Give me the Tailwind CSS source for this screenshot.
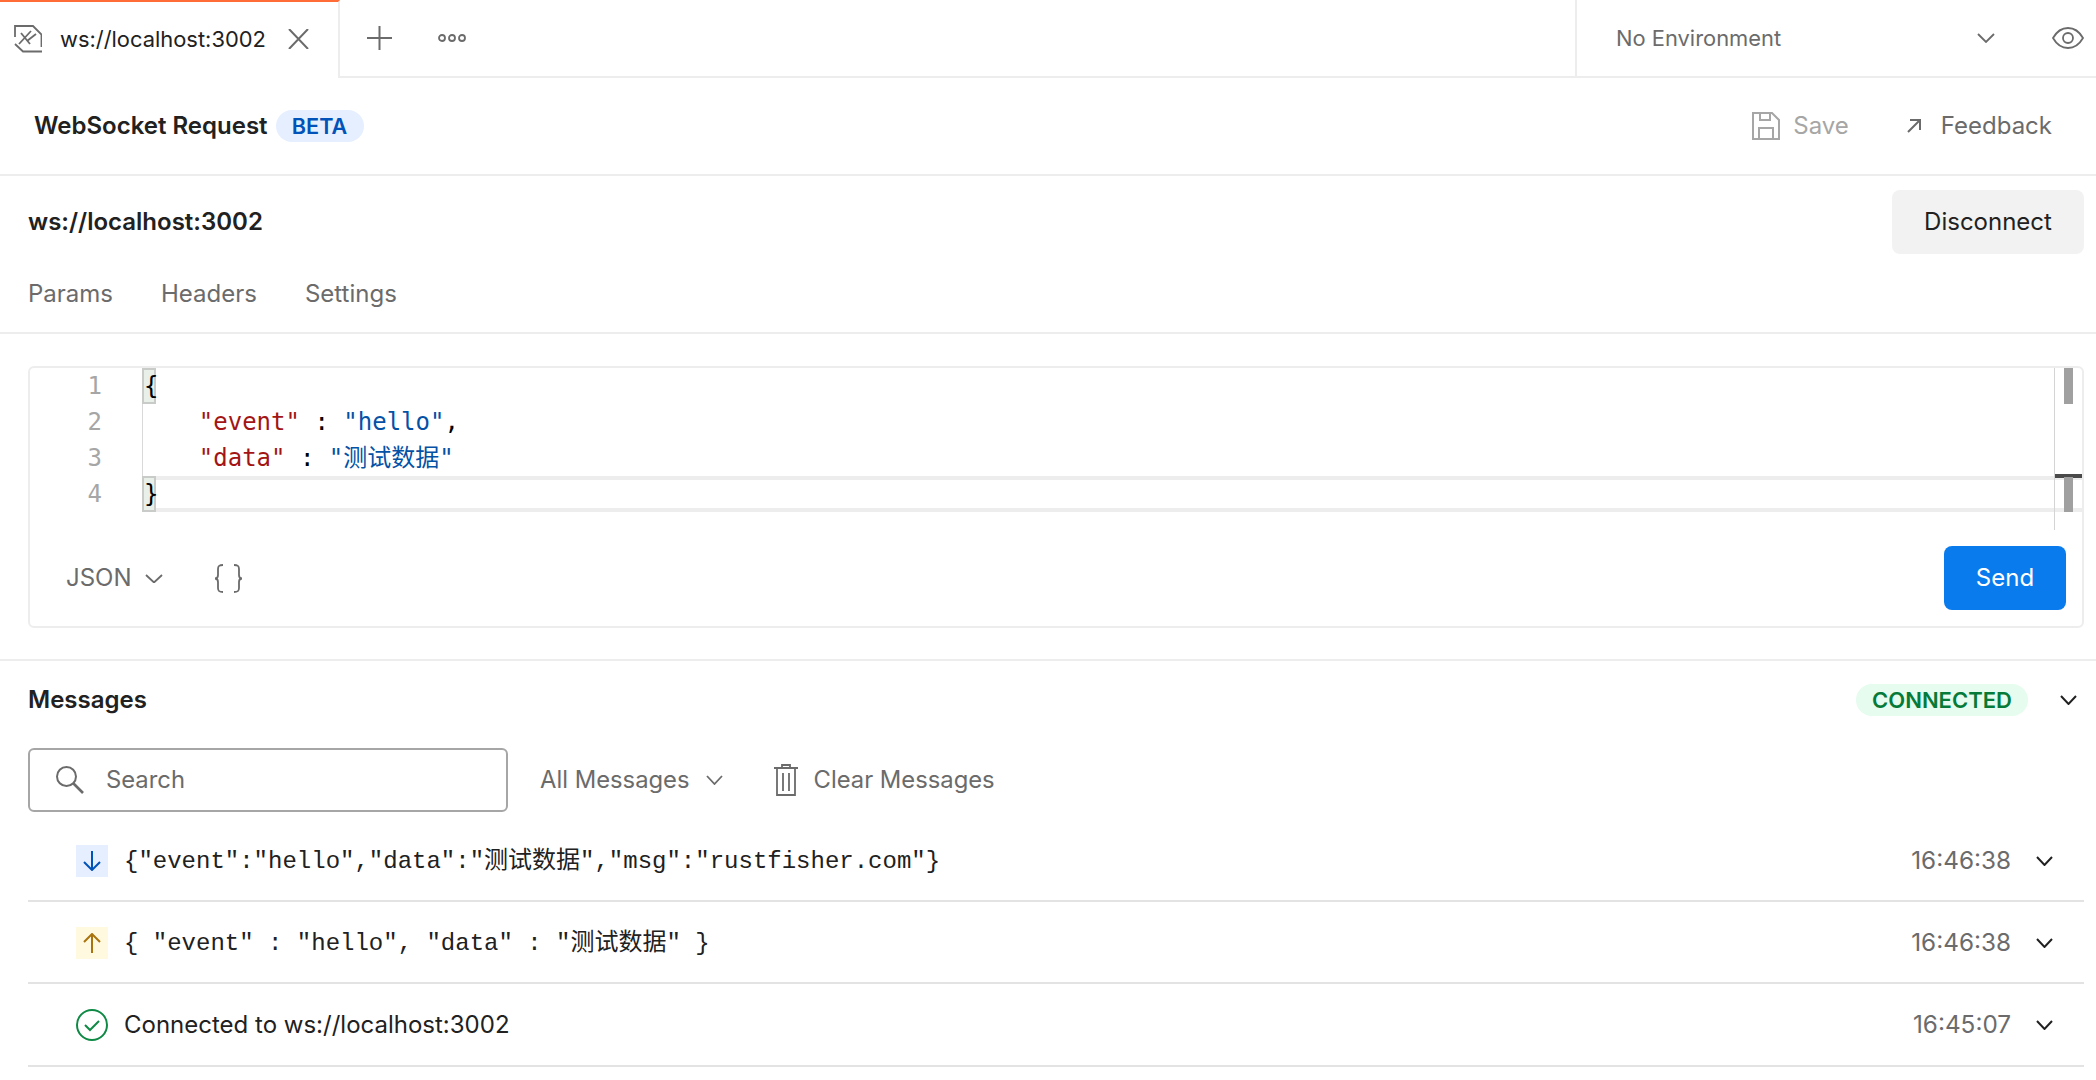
<!DOCTYPE html>
<html>
<head>
    <title>WebSocket Request</title>
    <script src="https://cdn.jsdelivr.net/npm/@tailwindcss/browser@4"></script>
</head>
<body class="bg-white">
    <div class="flex h-[1080px] w-[2096px] flex-col overflow-hidden font-['Inter',sans-serif] text-[24px] text-[#6b6b6b]">

        <!-- tab bar -->
        <div class="flex h-[78px] shrink-0 text-[21.9px]">
            <div class="flex w-[340px] items-center border-t-2 border-r-2 border-t-[#ff6c37] border-r-[#ededed] pb-[2px] pl-[14px]">
                <svg class="h-[28px] w-[28px]" viewBox="0 0 28 28" fill="none" stroke="#6b6b6b" stroke-width="1.8">
                    <path d="M1 12V1H19L27.5 9.5V22"/><path d="M1 19L9 26.5H28"/><path d="M7 8L16 19"/><path d="M5 19L17 6"/><path d="M13 16L22 9"/>
                </svg>
                <span class="ml-[18px] text-[#212121]">ws://localhost:3002</span>
                <svg class="ml-[22px] h-[20px] w-[21px]" viewBox="0 0 21 20" fill="none" stroke="#6b6b6b" stroke-width="2"><path d="M1 0L20 20M20 0L1 20"/></svg>
            </div>
            <div class="flex flex-1 items-center border-b-2 border-[#ededed]">
                <svg class="ml-[27px] h-[24px] w-[25px]" viewBox="0 0 25 24" fill="none" stroke="#6b6b6b" stroke-width="2"><path d="M12.5 0V24M0 12H25"/></svg>
                <svg class="ml-[46px] h-[10px] w-[28px]" viewBox="0 0 28 10" fill="none" stroke="#6b6b6b" stroke-width="1.8"><circle cx="4" cy="5" r="3"/><circle cx="14" cy="5" r="3"/><circle cx="24" cy="5" r="3"/></svg>
                <div class="ml-auto flex h-full w-[521px] items-center border-l-2 border-[#ededed] pl-[39px]">
                    <span>No Environment</span>
                    <svg class="ml-[196px] h-[10px] w-[18px]" viewBox="0 0 18 10" fill="none" stroke="#6b6b6b" stroke-width="1.8"><path d="M1 1L9 9L17 1"/></svg>
                    <svg class="ml-[57px] h-[22px] w-[32px]" viewBox="0 0 32 22" fill="none" stroke="#6b6b6b" stroke-width="1.8"><path d="M1 11C5 4 10 1 16 1C22 1 27 4 31 11C27 18 22 21 16 21C10 21 5 18 1 11Z"/><circle cx="16" cy="11" r="5"/></svg>
                </div>
            </div>
        </div>

        <!-- title row -->
        <div class="flex h-[98px] shrink-0 items-center border-b-2 border-[#ededed] pl-[34px] pr-[44px]">
            <span class="font-semibold text-[#212121]">WebSocket Request</span>
            <span class="ml-[8px] flex h-[32px] w-[88px] items-center justify-center rounded-full bg-[#e6efff] text-[21.6px] font-semibold text-[#0053b8]">BETA</span>
            <svg class="ml-auto h-[28px] w-[28px]" viewBox="0 0 28 28" fill="none" stroke="#a6a6a6" stroke-width="2"><path d="M1 1H20L27 8V27H1Z"/><path d="M8 1V8H18V1"/><path d="M7 27V16H21V27"/></svg>
            <span class="ml-[13px] text-[#a6a6a6]">Save</span>
            <svg class="ml-[58px] h-[14px] w-[14px]" viewBox="0 0 14 14" fill="none" stroke="#6b6b6b" stroke-width="2"><path d="M1 13L13 1M3 1H13V11"/></svg>
            <span class="ml-[20px]">Feedback</span>
        </div>

        <!-- url row -->
        <div class="flex h-[78px] shrink-0 items-center justify-between pl-[28px] pr-[12px] pt-[14px]">
            <span class="font-semibold text-[#212121]">ws://localhost:3002</span>
            <button class="h-[64px] w-[192px] rounded-[8px] bg-[#f2f2f2] text-[#212121]">Disconnect</button>
        </div>

        <!-- tabs -->
        <div class="flex h-[80px] shrink-0 items-center gap-[48px] border-b-2 border-[#ededed] pl-[28px] pt-[2px]">
            <span>Params</span>
            <span>Headers</span>
            <span>Settings</span>
        </div>

        <!-- editor -->
        <div class="ml-[28px] mt-[32px] flex h-[262px] w-[2056px] shrink-0 flex-col rounded-[6px] border-2 border-[#ededed]">
            <div class="relative flex h-[144px] font-['DejaVu_Sans_Mono','Noto_Sans_CJK_SC',monospace] text-[24px] leading-[36px] text-black">
                <div class="w-[112px] shrink-0 pr-[40px] text-right text-[#a6a6a6]">
                    <div class="h-[36px]">1</div>
                    <div class="h-[36px]">2</div>
                    <div class="h-[36px]">3</div>
                    <div class="h-[36px]">4</div>
                </div>
                <div class="flex-1 border-l border-[#d9d9d9]">
                    <div class="h-[36px]"><span class="-ml-px block h-[36px] w-[14px] border-2 border-[#c8cbc8] bg-[#e9efe9] leading-[32px]">{</span></div>
                    <div class="-ml-[2px] h-[36px] whitespace-pre">    <span class="text-[#a31515]">"event"</span> : <span class="text-[#0451a5]">"hello"</span>,</div>
                    <div class="-ml-[2px] h-[36px] whitespace-pre">    <span class="text-[#a31515]">"data"</span> : <span class="text-[#0451a5]">"测试数据"</span></div>
                    <div class="flex h-[36px]"><span class="-ml-px block h-[36px] w-[14px] shrink-0 border-2 border-[#c8cbc8] bg-[#e9efe9] leading-[32px]">}</span><div class="h-[36px] flex-1 border-y-4 border-[#ededed]"></div></div>
                </div>
                <!-- overview ruler -->
                <div class="absolute right-0 top-0 h-[162px] w-[28px] border-l border-[#d4d4d4]">
                    <div class="ml-[9px] h-[36px] w-[9px] bg-[#a0a0a0]"></div>
                    <div class="mt-[70px] h-[4px] w-[27px] bg-[#4a4a4a]"></div>
                    <div class="ml-[9px] -mt-px h-[35px] w-[9px] bg-[#a0a0a0]"></div>
                </div>
            </div>
            <div class="flex flex-1 items-start pl-[36px] pr-[16px] pt-[34px]">
                <div class="flex h-[64px] items-center">
                    <span>JSON</span>
                    <svg class="ml-[13px] h-[9px] w-[18px]" viewBox="0 0 18 9" fill="none" stroke="#6b6b6b" stroke-width="1.8"><path d="M1 1L9 8.5L17 1"/></svg>
                    <svg class="ml-[51px] h-[29px] w-[29px]" viewBox="0 0 29 29" fill="none" stroke="#6b6b6b" stroke-width="1.8"><path d="M9 1C5 1 4 2 4 5V11C4 13 3 14.5 1 14.5C3 14.5 4 16 4 18V24C4 27 5 28 9 28"/><path d="M20 1C24 1 25 2 25 5V11C25 13 26 14.5 28 14.5C26 14.5 25 16 25 18V24C25 27 24 28 20 28"/></svg>
                </div>
                <button class="ml-auto h-[64px] w-[122px] rounded-[8px] bg-[#097bed] text-white">Send</button>
            </div>
        </div>

        <!-- messages header -->
        <div class="mt-[31px] flex h-[89px] shrink-0 items-center border-t-2 border-[#ededed] pb-[9px] pl-[28px] pr-[19px]">
            <span class="font-semibold text-[#212121]">Messages</span>
            <span class="ml-auto flex h-[32px] w-[172px] items-center justify-center rounded-full bg-[#e5fcef] text-[22px] font-semibold text-[#067a38]">CONNECTED</span>
            <svg class="ml-[32px] h-[10px] w-[17px]" viewBox="0 0 17 10" fill="none" stroke="#212121" stroke-width="2"><path d="M1 1L8.5 9L16 1"/></svg>
        </div>

        <!-- filters -->
        <div class="flex h-[64px] shrink-0 items-center pl-[28px] text-[23.8px]">
            <div class="flex h-[64px] w-[480px] items-center rounded-[6px] border-2 border-[#a6a6a6] pl-[26px]">
                <svg class="h-[28px] w-[28px]" viewBox="0 0 28 28" fill="none" stroke="#6b6b6b" stroke-width="2"><circle cx="10.5" cy="10.5" r="9.5"/><path d="M17.5 17.5L27 27" stroke-width="2.6"/></svg>
                <span class="ml-[22px]">Search</span>
            </div>
            <span class="ml-[32px]">All Messages</span>
            <svg class="ml-[16px] h-[10px] w-[17px]" viewBox="0 0 17 10" fill="none" stroke="#6b6b6b" stroke-width="1.8"><path d="M1 1L8.5 9L16 1"/></svg>
            <svg class="ml-[51px] h-[32px] w-[24px]" viewBox="0 0 24 32" fill="none" stroke="#6b6b6b" stroke-width="1.8"><path d="M0 4H24M8 3V1H16V3" /><path d="M3 5V31H21V5"/><path d="M9 9V27M15 9V27"/></svg>
            <span class="ml-[16px]">Clear Messages</span>
        </div>

        <!-- message list -->
        <div class="ml-[28px] mt-[8px] w-[2056px]">
            <div class="flex h-[82px] items-center border-b-2 border-[#e3e3e3] pl-[48px] pr-[31px] pt-px">
                <div class="flex h-[32px] w-[32px] items-center justify-center bg-[#e6efff]">
                    <svg class="h-[20px] w-[18px]" viewBox="0 0 18 20" fill="none" stroke="#0053b8" stroke-width="2"><path d="M9 0V19M1 11L9 19L17 11"/></svg>
                </div>
                <span class="ml-[16px] whitespace-pre pt-[2px] font-['Liberation_Mono','Noto_Sans_CJK_SC',monospace] text-[24px] text-[#212121]">{"event":"hello","data":"测试数据","msg":"rustfisher.com"}</span>
                <span class="ml-auto text-[24.3px]">16:46:38</span>
                <svg class="ml-[25px] h-[10px] w-[17px]" viewBox="0 0 17 10" fill="none" stroke="#212121" stroke-width="2"><path d="M1 1L8.5 9L16 1"/></svg>
            </div>
            <div class="flex h-[82px] items-center border-b-2 border-[#e3e3e3] pl-[48px] pr-[31px] pt-px">
                <div class="flex h-[32px] w-[32px] items-center justify-center bg-[#fff9e0]">
                    <svg class="h-[20px] w-[18px]" viewBox="0 0 18 20" fill="none" stroke="#a9730d" stroke-width="2"><path d="M9 20V1M1 9L9 1L17 9"/></svg>
                </div>
                <span class="ml-[16px] whitespace-pre pt-[2px] font-['Liberation_Mono','Noto_Sans_CJK_SC',monospace] text-[24px] text-[#212121]">{ "event" : "hello", "data" : "测试数据" }</span>
                <span class="ml-auto text-[24.3px]">16:46:38</span>
                <svg class="ml-[25px] h-[10px] w-[17px]" viewBox="0 0 17 10" fill="none" stroke="#212121" stroke-width="2"><path d="M1 1L8.5 9L16 1"/></svg>
            </div>
            <div class="flex h-[83px] items-center border-b-2 border-[#e3e3e3] pl-[48px] pr-[31px]">
                <svg class="h-[32px] w-[32px]" viewBox="0 0 32 32" fill="none" stroke="#0e8a45" stroke-width="2"><circle cx="16" cy="16" r="15"/><path d="M9 16L14 21L23 12"/></svg>
                <span class="ml-[16px] text-[#212121]">Connected to ws://localhost:3002</span>
                <span class="ml-auto text-[24.3px]">16:45:07</span>
                <svg class="ml-[25px] h-[10px] w-[17px]" viewBox="0 0 17 10" fill="none" stroke="#212121" stroke-width="2"><path d="M1 1L8.5 9L16 1"/></svg>
            </div>
        </div>
    </div>
</body>
</html>
